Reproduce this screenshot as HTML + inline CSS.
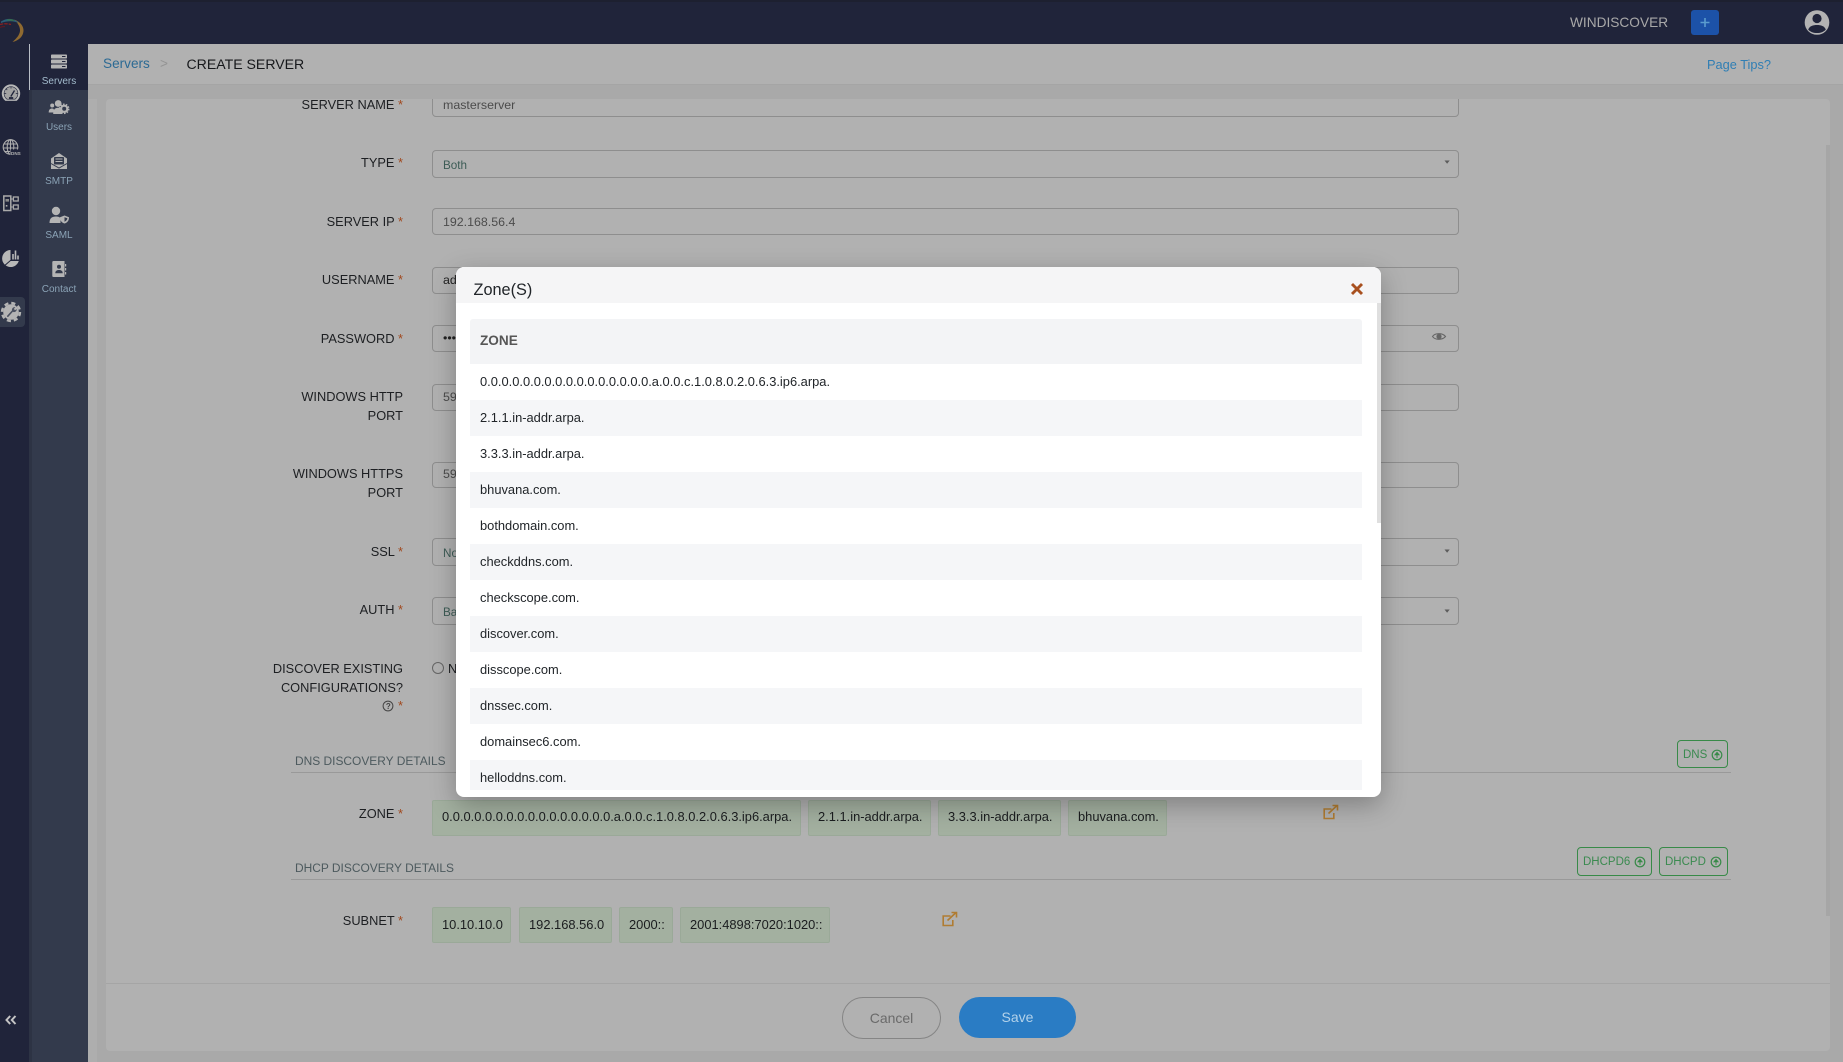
<!DOCTYPE html>
<html lang="en"><head><meta charset="utf-8"><title>Create Server</title>
<style>
*{box-sizing:border-box}
html,body{margin:0;padding:0;width:1843px;height:1062px;overflow:hidden;background:#a9a9a9;font-family:"Liberation Sans",Arial,sans-serif}
.a,.l,.i,.t,.b,.h,.s{position:absolute}
.l{left:0;width:403px;text-align:right;font-size:12.8px;line-height:19px;color:#1d1f22}
.l span,.st{color:#a0471c}
.i{left:432px;width:1027px;border:1px solid #8e8e8e;border-radius:4px;padding-left:10px;font-size:12.4px;color:#4c4c4c;display:flex;align-items:center}
.sel{font-size:11.7px;color:#3d5c56;padding-top:2px}
.up{padding-bottom:2px}
.t{height:36px;background:#a3b0a0;border:1px solid #9aa998;border-radius:2px;font-size:12.88px;line-height:34px;color:#1b1d1f;padding-left:9px;white-space:nowrap;overflow:hidden}
.z{line-height:32px}
.b{border:1px solid #388a48;border-radius:4px;color:#3b8a50;font-size:11.5px;white-space:nowrap;padding:1px 0 0 5px;display:flex;align-items:center;gap:4px}
.h{left:295px;font-size:11.95px;color:#4d5a5e;white-space:nowrap}
.s{left:29px;width:60px;text-align:center;font-size:10px;color:#8ba3b6}
.r{height:36px;line-height:36px;padding-left:10px;font-size:12.88px;color:#212529;background:#fff;white-space:nowrap}
.r.o{background:#f5f6f8}
</style></head><body>

<!-- page chrome -->
<div class="a" style="left:88px;top:84px;width:9px;height:978px;background:#aeaeae"></div>
<div class="a" style="left:106px;top:99px;width:1724px;height:952px;background:#b1b1b1;border-radius:4px"></div>

<!-- form inputs -->
<div class="i" style="top:88px;height:29px;padding-top:4px">masterserver</div>
<div class="i sel" style="top:150px;height:28px">Both</div>
<div class="i" style="top:208px;height:27px">192.168.56.4</div>
<div class="i up" style="top:267px;height:27px;color:#222">admin</div>
<div class="i up" style="top:325px;height:27px;color:#222">•••</div>
<div class="i up" style="top:384px;height:27px">5985</div>
<div class="i up" style="top:462px;height:26px">5986</div>
<div class="i sel" style="top:538px;height:28px">None</div>
<div class="i sel" style="top:597px;height:28px">Basic</div>

<div class="a" style="left:0;top:84px;width:1843px;height:15px;background:#a9a9a9"></div>
<div class="a" style="left:88px;top:44px;width:1755px;height:41px;background:#b1b1b1;border-bottom:1px solid #a5a5a5"></div>
<div class="a" style="left:1826px;top:145px;width:4px;height:771px;background:#a6a6a6"></div>

<!-- labels -->
<div class="l" style="top:95px">SERVER NAME <span>*</span></div>
<div class="l" style="top:153px">TYPE <span>*</span></div>
<div class="l" style="top:212px">SERVER IP <span>*</span></div>
<div class="l" style="top:270px">USERNAME <span>*</span></div>
<div class="l" style="top:329px">PASSWORD <span>*</span></div>
<div class="l" style="top:387px">WINDOWS HTTP<br>PORT</div>
<div class="l" style="top:464px">WINDOWS HTTPS<br>PORT</div>
<div class="l" style="top:542px">SSL <span>*</span></div>
<div class="l" style="top:600px">AUTH <span>*</span></div>
<div class="l" style="top:659px">DISCOVER EXISTING<br>CONFIGURATIONS?<br><span style="color:#a0471c;position:relative;top:-1px">*</span></div>
<div class="l" style="top:804px">ZONE <span>*</span></div>
<div class="l" style="top:911px">SUBNET <span>*</span></div>

<div class="a" style="left:432px;top:662px;width:12px;height:12px;border:1px solid #666;border-radius:50%"></div>
<div class="a" style="left:448px;top:659px;font-size:12.8px;line-height:19px;color:#1d1f22">No</div>

<!-- section heads -->
<div class="h" style="top:754px">DNS DISCOVERY DETAILS</div>
<div class="a" style="left:291px;top:772px;width:1440px;height:1px;background:#999"></div>
<div class="h" style="top:861px">DHCP DISCOVERY DETAILS</div>
<div class="a" style="left:291px;top:879px;width:1440px;height:1px;background:#999"></div>

<div class="b" style="left:1677px;top:740px;width:51px;height:28px">DNS<svg width="12" height="12" viewBox="0 0 12 12"><circle cx="6" cy="6" r="4.8" fill="none" stroke="#388a48" stroke-width="1.2"/><path d="M6 9V4M4 5.8 6 3.4 8 5.8Z" stroke="#388a48" fill="#388a48"/></svg></div>
<div class="b" style="left:1577px;top:847px;width:75px;height:29px">DHCPD6<svg width="12" height="12" viewBox="0 0 12 12"><circle cx="6" cy="6" r="4.8" fill="none" stroke="#388a48" stroke-width="1.2"/><path d="M6 9V4M4 5.8 6 3.4 8 5.8Z" stroke="#388a48" fill="#388a48"/></svg></div>
<div class="b" style="left:1659px;top:847px;width:69px;height:29px">DHCPD<svg width="12" height="12" viewBox="0 0 12 12"><circle cx="6" cy="6" r="4.8" fill="none" stroke="#388a48" stroke-width="1.2"/><path d="M6 9V4M4 5.8 6 3.4 8 5.8Z" stroke="#388a48" fill="#388a48"/></svg></div>

<!-- tags -->
<div class="t z" style="left:432px;top:800px;width:369px">0.0.0.0.0.0.0.0.0.0.0.0.0.0.0.0.a.0.0.c.1.0.8.0.2.0.6.3.ip6.arpa.</div>
<div class="t z" style="left:808px;top:800px;width:123px">2.1.1.in-addr.arpa.</div>
<div class="t z" style="left:938px;top:800px;width:123px">3.3.3.in-addr.arpa.</div>
<div class="t z" style="left:1068px;top:800px;width:99px">bhuvana.com.</div>
<div class="t" style="left:432px;top:907px;width:79px">10.10.10.0</div>
<div class="t" style="left:519px;top:907px;width:93px">192.168.56.0</div>
<div class="t" style="left:619px;top:907px;width:54px">2000::</div>
<div class="t" style="left:680px;top:907px;width:150px">2001:4898:7020:1020::</div>

<!-- footer -->
<div class="a" style="left:106px;top:983px;width:1724px;height:1px;background:#a5a5a5"></div>
<div class="a" style="left:842px;top:997px;width:99px;height:42px;border:1px solid #858585;border-radius:21px;text-align:center;line-height:40px;font-size:14px;color:#6a6a6a">Cancel</div>
<div class="a" style="left:959px;top:997px;width:117px;height:41px;background:#2a7cc4;border-radius:21px;text-align:center;line-height:40px;font-size:14px;color:#b3d2ea">Save</div>

<!-- top + side -->
<div class="a" style="left:0;top:0;width:1843px;height:44px;background:#20243a;border-top:2px solid #1d2030"></div>
<div class="a" style="left:0;top:44px;width:29px;height:1018px;background:#20243a"></div>
<div class="a" style="left:29px;top:44px;width:59px;height:1018px;background:#333a4c"></div>
<div class="a" style="left:29px;top:44px;width:3px;height:1018px;background:#2d3344"></div>
<div class="a" style="left:29px;top:44px;width:59px;height:46px;background:#20243a;border-left:1px solid #b9bec6"></div>
<div class="a" style="left:0;top:297px;width:25px;height:30px;background:#333a4c;border-radius:0 4px 4px 0"></div>

<div class="s" style="top:75.5px;color:#a4bccd">Servers</div>
<div class="s" style="top:121.5px">Users</div>
<div class="s" style="top:175.5px">SMTP</div>
<div class="s" style="top:229.5px">SAML</div>
<div class="s" style="top:283.5px">Contact</div>

<div class="a" style="left:103px;top:56px;font-size:13.6px;color:#2c6a94">Servers</div>
<div class="a" style="left:160px;top:56px;font-size:13.6px;color:#949494">&gt;</div>
<div class="a" style="left:186.5px;top:56px;font-size:14.1px;color:#16181b">CREATE SERVER</div>
<div class="a" style="left:1707px;top:57px;font-size:12.8px;color:#2f7eb4">Page Tips?</div>
<div class="a" style="left:1570px;top:15px;font-size:13.7px;color:#a9a9a9">WINDISCOVER</div>
<div class="a" style="left:1691px;top:10px;width:28px;height:25px;background:#1c52a8;border-radius:3px"></div>

<!-- icons -->
<svg class="a" style="left:0;top:0" width="1843" height="1062" viewBox="0 0 1843 1062">
 <!-- logo -->
 <path d="M14 19.5C20 21.5 23.8 26 23.5 31 23 36.5 19 40.5 12.5 42 16.5 38.5 19.5 35 20 31 20.3 27 18 23 14 19.5Z" fill="#8f6a30"/>
 <path d="M1 21.5C6 18.5 11 18 15.5 20.5 17 21.3 18 22.3 18.5 23 14 21 8 20.5 1 23Z" fill="#2b5f78"/>
 <path d="M7 19.6C9.5 19 12 19.2 14 20L13.5 21C11.5 20.5 9.5 20.3 7.5 20.6Z" fill="#3a7044"/>
 <path d="M0 24.5C3 23.5 7 23.5 11 24.5" fill="none" stroke="#8a2020" stroke-width="1.3" stroke-dasharray="3.4 1"/>
 <path d="M0 27.5C2 26.6 3.5 26.4 5 26.6" fill="none" stroke="#5a1a22" stroke-width="1.2"/>
 <!-- plus -->
 <path d="M1705 18v9M1700.5 22.5h9" stroke="#5a9cce" stroke-width="1.6"/>
 <!-- avatar -->
 <circle cx="1817" cy="22.5" r="12.3" fill="#b3b3b3"/>
 <circle cx="1817" cy="18.5" r="4.6" fill="#20243a"/>
 <path d="M1808.2 29.6C1809.5 26 1813 25 1817 25S1824.5 26 1825.8 29.6C1823.5 32 1820.5 33 1817 33S1810.5 32 1808.2 29.6Z" fill="#20243a"/>

 <!-- Servers -->
 <g fill="#b4b4b4">
  <rect x="51" y="54.5" width="16" height="4" rx=".8"/><rect x="51" y="59.5" width="16" height="4" rx=".8"/><rect x="51" y="64.5" width="16" height="4" rx=".8"/>
 </g>
 <g fill="#20243a"><rect x="62" y="56" width="3.5" height="1"/><rect x="62" y="61" width="3.5" height="1"/><rect x="62" y="66" width="3.5" height="1"/></g>
 <!-- Users -->
 <g fill="#b4b4b4" transform="translate(-.8 0)">
  <circle cx="59" cy="103.5" r="3.4"/><circle cx="53" cy="105.5" r="2"/>
  <path d="M49.5 112.5C49.5 109.5 51 108.5 53 108.5S55 110 54.5 112.5ZM54 114C54 109.5 56 107.8 59 107.8S63 109 63 112V114Z"/>
  <circle cx="65" cy="108.8" r="3.1" fill="none" stroke="#b4b4b4" stroke-width="2.2"/>
  <circle cx="65" cy="108.8" r="4.6" fill="none" stroke="#b4b4b4" stroke-width="1.4" stroke-dasharray="1.6 1.3"/>
 </g>
 <!-- SMTP -->
 <path d="M51 158.5 59 153 67 158.5V169H51Z" fill="#b4b4b4"/>
 <rect x="54" y="157" width="10" height="7.5" rx=".8" fill="#333a4c"/>
 <path d="M55.5 159h7M55.5 161.5h7" stroke="#b4b4b4" stroke-width="1.1"/>
 <path d="M51 163.5 59 168 67 163.5" fill="none" stroke="#333a4c" stroke-width="1"/>
 <!-- SAML -->
 <circle cx="56" cy="211" r="4.2" fill="#b4b4b4"/>
 <path d="M49.5 223C49.5 218 52 216.5 56 216.5 58 216.5 59.5 217 60.5 218V223Z" fill="#b4b4b4"/>
 <path d="M64.5 215.5 69 217.2C69 220.5 67.5 222.5 64.5 223.5 61.5 222.5 60 220.5 60 217.2Z" fill="#b4b4b4"/>
 <path d="M64.5 217.2 64.5 221.8C66 221 67.2 219.8 67.4 218.2Z" fill="#333a4c"/>
 <!-- Contact -->
 <path d="M53.5 261H64.5V277H53.5C52.8 277 52.3 276.5 52.3 276V262C52.3 261.5 52.8 261 53.5 261Z" fill="#b4b4b4"/>
 <path d="M65 264h1.2v2.5H65ZM65 268h1.2v2.5H65ZM65 272h1.2v2.5H65Z" fill="#b4b4b4"/>
 <circle cx="59" cy="266.8" r="2" fill="#333a4c"/>
 <path d="M55.3 273.2C55.3 270.8 57 270 59 270S62.7 270.8 62.7 273.2Z" fill="#333a4c"/>

 <!-- rail: gauge -->
 <path d="M5.5 100.5A8.8 8.8 0 1 1 16.5 100.5Z" fill="#bcbcbc" stroke="#b4b4b4" stroke-width=".8"/>
 <path d="M7 99.2A6.9 6.9 0 1 1 15 99.2Z" fill="#a2a2a2" stroke="#20243a" stroke-width=".6"/>
 <path d="M9 98h4.2" stroke="#20243a" stroke-width="1.8"/>
 <path d="M10.8 96.5 14.5 90.5" stroke="#20243a" stroke-width="1.3"/>
 <path d="M11 86.5v2M6 88.5l1.2 1.6M4.2 93.5h2M17.8 93.5h-2" stroke="#20243a" stroke-width=".7"/>
 <!-- globe -->
 <g fill="none" stroke="#adadad" stroke-width="1.1">
  <circle cx="10.5" cy="147" r="7.3"/>
  <ellipse cx="10.5" cy="147" rx="3.3" ry="7.3"/>
  <path d="M3.7 144h13.6M3.5 148h14M4.5 151.5h10M10.5 139.7v14.6"/>
 </g>
 <rect x="10.5" y="149.5" width="10.5" height="6" fill="#20243a"/>
 <text x="11" y="155" font-family="Liberation Sans" font-size="4.6" font-weight="700" fill="#b4b4b4">DNS</text>
 <!-- layout -->
 <rect x="3.8" y="196" width="7" height="14.5" fill="none" stroke="#aaa" stroke-width="1.5"/>
 <rect x="5.5" y="199" width="3.5" height="2.6" fill="#8a8a8a"/><rect x="5.8" y="205" width="1.6" height="1.6" fill="#aaa"/>
 <rect x="13.4" y="197" width="4.8" height="4" fill="none" stroke="#aaa" stroke-width="1.3"/>
 <rect x="13.4" y="205" width="4.8" height="4" fill="none" stroke="#aaa" stroke-width="1.3"/>
 <path d="M10.8 199H13.4M10.8 207H13.4" stroke="#aaa" stroke-width="1"/>
 <!-- pie -->
 <g transform="translate(0 1)">
 <path d="M10.5 250.5A8.5 8.5 0 1 0 19 260.5L10.5 260.5Z" fill="#b8b8b8" transform="translate(0 -1.5)"/>
 <path d="M3 266 10.5 259.5H19.2" fill="none" stroke="#20243a" stroke-width="1"/>
 <path d="M13 258.5V253M15.5 258.5V249.5M18 258.5V254.5" stroke="#b8b8b8" stroke-width="1.6"/>
 </g>
 <!-- gear -->
 <circle cx="11" cy="312" r="7.8" fill="#b4b4b4"/>
 <circle cx="11" cy="312" r="9" fill="none" stroke="#b4b4b4" stroke-width="2.4" stroke-dasharray="4.1 2.97"/>
 <path d="M7.8 316.2 12.5 311" stroke="#4a5060" stroke-width="1.6" stroke-linecap="round"/>
 <path d="M12 310.5C11.6 308.3 13.3 306.8 15.3 307.2L13.9 308.9 15 310.2 16.7 309C17 310.9 15.3 312.5 13.3 312" fill="#4a5060"/>
 <!-- collapse -->
 <path d="M10.2 1016 6.5 1020 10.2 1024M15.5 1016 11.8 1020 15.5 1024" fill="none" stroke="#c4c4c4" stroke-width="2"/>

 <!-- select arrows, eye, help -->
 <path d="M1444.5 160.5h5.2l-2.6 3.2ZM1444.5 549.5h5.2l-2.6 3.2ZM1444.5 609.5h5.2l-2.6 3.2Z" fill="#5c5c5c"/>
 <path d="M1432.5 336.5C1435 332.8 1442.5 332.8 1445.5 336.5 1442.5 340.2 1435 340.2 1432.5 336.5Z" fill="none" stroke="#666" stroke-width="1.1"/>
 <circle cx="1439" cy="336.5" r="2.6" fill="#666"/>
 <g transform="translate(388 706)"><circle r="4.9" fill="none" stroke="#444" stroke-width="1"/><text x="-2.2" y="2.8" font-family="Liberation Sans" font-size="8" font-weight="700" fill="#444">?</text></g>
 <!-- edit icons -->
 <g fill="none" stroke="#b07c32" stroke-width="1.6">
  <path d="M1331.5 809H1324.2V818.5H1333.8V813"/><path d="M1328.5 813.5 1336.5 806M1332.5 805.5H1337.5V810.5"/>
  <path d="M950.5 916H943.2V925.5H952.8V920"/><path d="M947.5 920.5 955.5 913M951.5 912.5H956.5V917.5"/>
 </g>
</svg>

<!-- modal -->
<div class="a" style="left:456px;top:267px;width:925px;height:530px;background:#fff;border-radius:8px;box-shadow:0 8px 26px rgba(0,0,0,.28);overflow:hidden">
 <div class="a" style="left:0;top:0;width:925px;height:36px;background:#f5f5f6"></div>
 <div class="a" style="left:17.5px;top:11px;font-size:16.3px;line-height:24px;color:#212529">Zone(S)</div>
 <svg class="a" style="left:893px;top:13.5px" width="16" height="16" viewBox="0 0 16 16"><path d="M3 3 13 13M13 3 3 13" stroke="#a8501f" stroke-width="2.9"/></svg>
 <div class="a" style="left:921px;top:36px;width:4px;height:220px;background:#dfdfdf"></div>
 <div class="a" style="left:14px;top:52px;width:892px;height:471px;overflow:hidden;border-radius:3px 3px 0 0">
  <div style="height:45px;line-height:43px;padding-left:10px;background:#f3f4f6;font-size:13.6px;font-weight:700;color:#565656">ZONE</div>
  <div class="r">0.0.0.0.0.0.0.0.0.0.0.0.0.0.0.0.a.0.0.c.1.0.8.0.2.0.6.3.ip6.arpa.</div>
  <div class="r o">2.1.1.in-addr.arpa.</div>
  <div class="r">3.3.3.in-addr.arpa.</div>
  <div class="r o">bhuvana.com.</div>
  <div class="r">bothdomain.com.</div>
  <div class="r o">checkddns.com.</div>
  <div class="r">checkscope.com.</div>
  <div class="r o">discover.com.</div>
  <div class="r">disscope.com.</div>
  <div class="r o">dnssec.com.</div>
  <div class="r">domainsec6.com.</div>
  <div class="r o">helloddns.com.</div>
 </div>
</div>
</body></html>
